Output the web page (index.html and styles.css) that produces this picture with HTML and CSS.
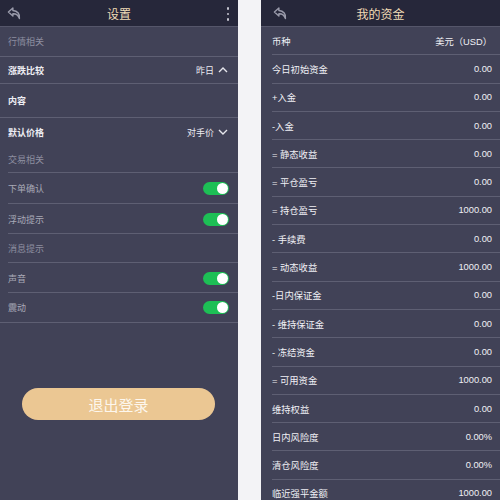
FILE: index.html
```html
<!DOCTYPE html>
<html>
<head>
<meta charset="utf-8">
<link rel="stylesheet" href="styles.css">
</head>
<body>
<div class="stage">
  <section class="phone left">
    <header class="bar">
      <svg class="back" viewBox="0 0 14 14" width="15" height="15"><path d="M5.5 1.8 L1.3 5.6 L5.5 9.4 L5.5 7.2 C8.4 7 10.4 8.3 11.6 11.8 C12.4 7.6 9.8 4.5 5.5 4.2 Z" fill="none" stroke="#9a9bab" stroke-width="1.3" stroke-linejoin="round"/></svg>
      <div class="title">设置</div>
      <div class="dots"><i></i><i></i><i></i></div>
    </header>
    <div class="row sect full h30"><span class="muted">行情相关</span></div>
    <div class="row full h27"><span class="strong">涨跌比较</span><span class="val">昨日<svg class="chev" viewBox="0 0 10 6" width="10" height="6"><path d="M1 5 L5 1 L9 5" fill="none" stroke="#e6e6ec" stroke-width="1.4"/></svg></span></div>
    <div class="row full h34"><span class="strong">内容</span></div>
    <div class="row h28"><span class="strong">默认价格</span><span class="val">对手价<svg class="chev" viewBox="0 0 10 6" width="10" height="6"><path d="M1 1 L5 5 L9 1" fill="none" stroke="#e6e6ec" stroke-width="1.4"/></svg></span></div>
    <div class="row sect inset h27"><span class="muted">交易相关</span></div>
    <div class="row inset h31"><span class="soft">下单确认</span><span class="toggle"></span></div>
    <div class="row inset h30"><span class="soft">浮动提示</span><span class="toggle"></span></div>
    <div class="row sect inset h29"><span class="muted">消息提示</span></div>
    <div class="row inset h30"><span class="soft">声音</span><span class="toggle"></span></div>
    <div class="row full h30"><span class="soft">震动</span><span class="toggle"></span></div>
    <div class="btnwrap"><button class="logout">退出登录</button></div>
  </section>
  <div class="gap"></div>
  <section class="phone right">
    <header class="bar">
      <svg class="back" viewBox="0 0 14 14" width="15" height="15"><path d="M5.5 1.8 L1.3 5.6 L5.5 9.4 L5.5 7.2 C8.4 7 10.4 8.3 11.6 11.8 C12.4 7.6 9.8 4.5 5.5 4.2 Z" fill="none" stroke="#9a9bab" stroke-width="1.3" stroke-linejoin="round"/></svg>
      <div class="title">我的资金</div>
    </header>
    <div class="list">
      <div class="item"><span>币种</span><span>美元（USD）</span></div>
      <div class="item"><span>今日初始资金</span><span>0.00</span></div>
      <div class="item"><span>+入金</span><span>0.00</span></div>
      <div class="item"><span>-入金</span><span>0.00</span></div>
      <div class="item"><span>= 静态收益</span><span>0.00</span></div>
      <div class="item"><span>= 平仓盈亏</span><span>0.00</span></div>
      <div class="item"><span>= 持仓盈亏</span><span>1000.00</span></div>
      <div class="item"><span>- 手续费</span><span>0.00</span></div>
      <div class="item"><span>= 动态收益</span><span>1000.00</span></div>
      <div class="item"><span>-日内保证金</span><span>0.00</span></div>
      <div class="item"><span>- 维持保证金</span><span>0.00</span></div>
      <div class="item"><span>- 冻结资金</span><span>0.00</span></div>
      <div class="item"><span>= 可用资金</span><span>1000.00</span></div>
      <div class="item"><span>维持权益</span><span>0.00</span></div>
      <div class="item"><span>日内风险度</span><span>0.00%</span></div>
      <div class="item"><span>清仓风险度</span><span>0.00%</span></div>
      <div class="item"><span>临近强平金额</span><span>1000.00</span></div>
    </div>
  </section>
</div>
</body>
</html>
```
FILE: styles.css
```css
html, body {
  margin: 0;
  padding: 0;
  background: #f1f1f4;
}
body {
  font-family: "Liberation Sans", "Noto Sans CJK SC", sans-serif;
}
.stage {
  display: flex;
  width: 500px;
  height: 500px;
  overflow: hidden;
}
.phone {
  background: #414257;
  height: 500px;
  overflow: hidden;
  display: flex;
  flex-direction: column;
}
.left { width: 238px; }
.gap { width: 23px; background: #f3f3f6; }
.right { width: 239px; }
.bar {
  height: 27px;
  flex: none;
  background: #26273a;
  border-bottom: 1px solid #55566a;
  box-sizing: border-box;
  display: flex;
  align-items: center;
  position: relative;
}
.back {
  position: absolute;
  left: 7px;
  top: 6px;
}
.right .back { left: 12px; }
.title {
  flex: 1;
  text-align: center;
  color: #f1dcb6;
  font-size: 12px;
  font-family: "Noto Sans CJK SC", sans-serif;
}
.dots {
  position: absolute;
  right: 9px;
  top: 7px;
  display: flex;
  flex-direction: column;
  gap: 3px;
}
.dots i {
  display: block;
  width: 2.5px;
  height: 2.5px;
  background: #c4c5cf;
  border-radius: 50%;
}
.row {
  display: flex;
  align-items: center;
  justify-content: space-between;
  padding: 0 10px 0 8px;
  font-size: 9px;
  font-family: "Noto Sans CJK SC", sans-serif;
  box-sizing: border-box;
  flex: none;
}
.row.full { border-bottom: 1px solid #5e5f73; }
.row.inset { background-image: linear-gradient(#5e5f73, #5e5f73); background-size: calc(100% - 8px) 1px; background-position: 8px 100%; background-repeat: no-repeat; }
.h27 { height: 27px; }
.h28 { height: 28px; }
.h29 { height: 29px; }
.h30 { height: 30px; }
.h31 { height: 31px; }
.h34 { height: 34px; }
.muted { color: #8e8fa0; }
.strong { color: #ededf3; font-weight: bold; }
.soft { color: #a9aab8; }
.val {
  color: #ececf2;
  display: flex;
  align-items: center;
  gap: 4px;
}
.toggle {
  width: 26px;
  height: 13px;
  border-radius: 7px;
  background: #1dbf55;
  position: relative;
  margin-right: -1px;
}
.toggle::after {
  content: "";
  position: absolute;
  right: 1px;
  top: 1px;
  width: 11px;
  height: 11px;
  border-radius: 50%;
  background: #ffffff;
}
.btnwrap {
  padding: 65px 23px 0 22px;
}
.logout {
  width: 193px;
  height: 32px;
  border: none;
  border-radius: 16px;
  background: #ebc793;
  color: #fdf7ee;
  font-size: 15px;
  font-family: "Noto Sans CJK SC", sans-serif;
  padding: 0;
}
.list {
  display: flex;
  flex-direction: column;
}
.item {
  height: 28.3px;
  flex: none;
  box-sizing: border-box;
  margin-left: 11px;
  padding-right: 8px;
  border-bottom: 1px solid #5e5f73;
  display: flex;
  align-items: center;
  justify-content: space-between;
  font-size: 9.3px;
  color: #f0f0f5;
  font-family: "Liberation Sans", "Noto Sans CJK SC", sans-serif;
}
```
